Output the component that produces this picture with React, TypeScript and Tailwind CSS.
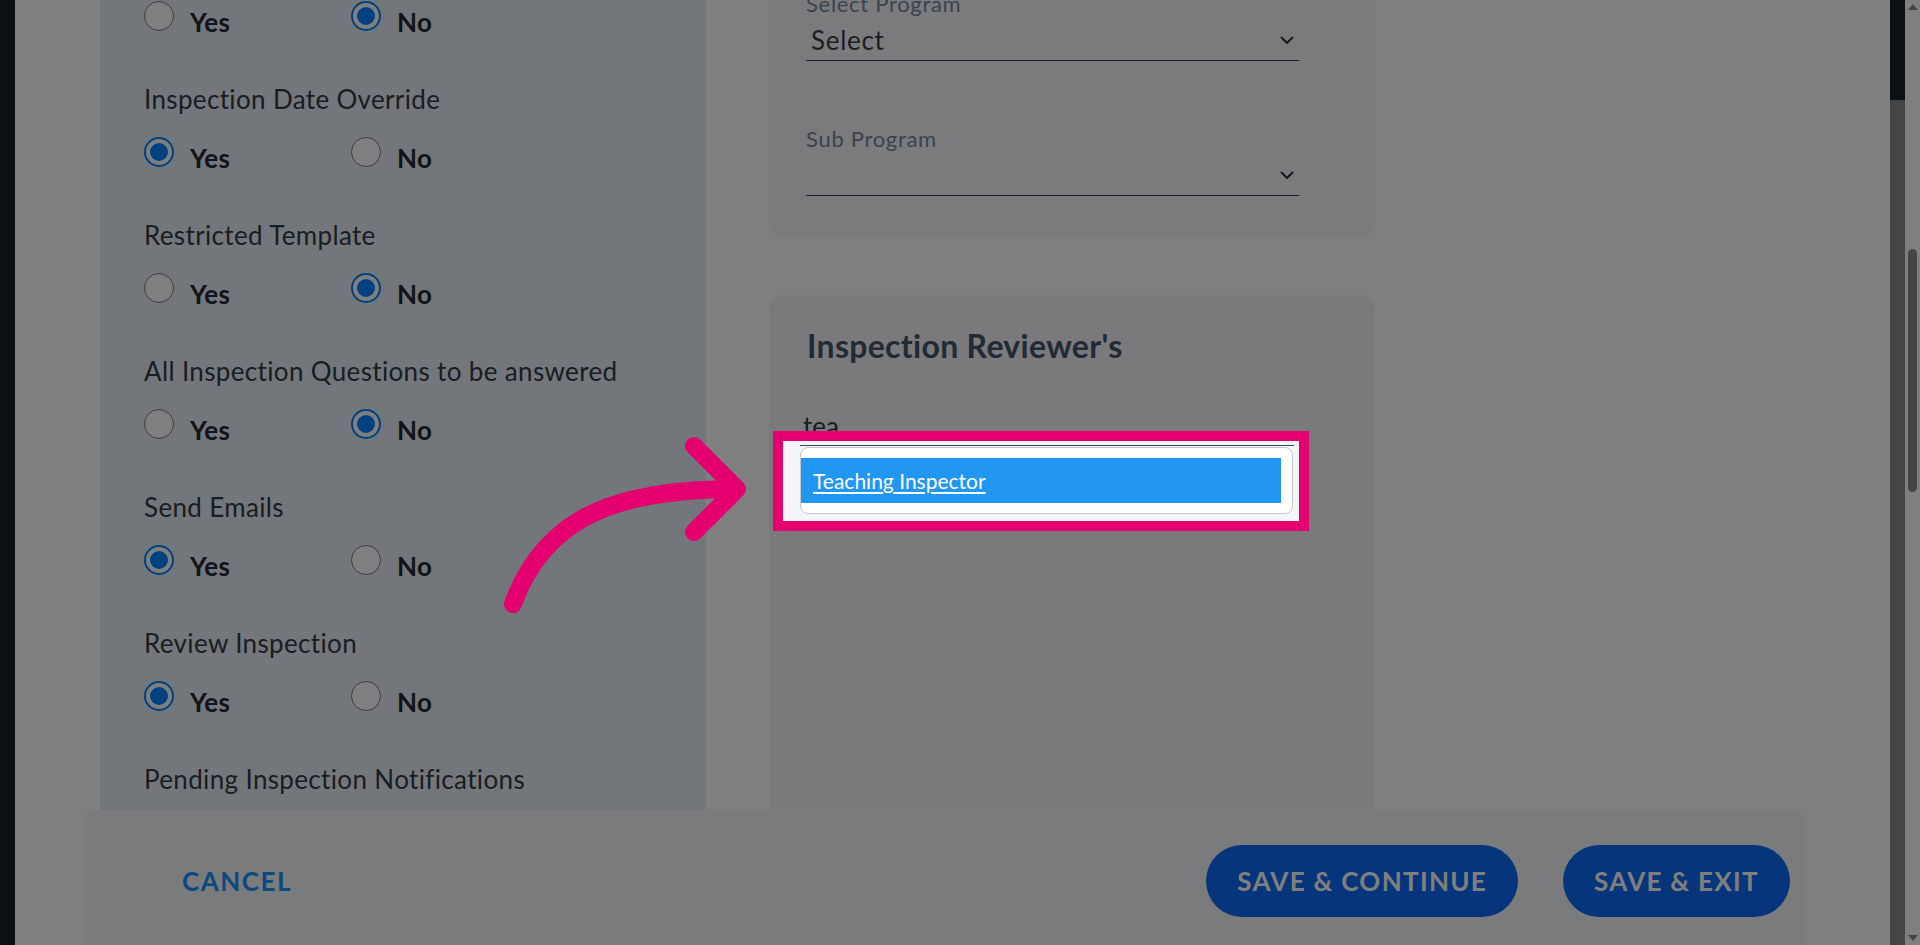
import React from 'react';

type Choice = 'yes' | 'no';

// first row's label is scrolled out of view
const settings: { label: string | null; value: Choice }[] = [
    { label: null, value: 'no' },
    { label: 'Inspection Date Override', value: 'yes' },
    { label: 'Restricted Template', value: 'no' },
    { label: 'All Inspection Questions to be answered', value: 'no' },
    { label: 'Send Emails', value: 'yes' },
    { label: 'Review Inspection', value: 'yes' },
    { label: 'Pending Inspection Notifications', value: 'no' },
];

const Radio = ({ checked }: { checked: boolean }) =>
    checked ? (
        <span className="flex h-[30px] w-[30px] shrink-0 items-center justify-center rounded-full border-2 border-[#0084fe] bg-white">
            <span className="h-[18px] w-[18px] rounded-full bg-[#0084fe]" />
        </span>
    ) : (
        <span className="h-[30px] w-[30px] shrink-0 rounded-full border-[1.5px] border-[#7a7a7a] bg-white" />
    );

const Option = ({ text, checked }: { text: string; checked: boolean }) => (
    <div className="flex h-[30px] w-[207px] items-start gap-4">
        <Radio checked={checked} />
        <span className="text-[26px] font-bold leading-[42px] tracking-[0.4px] text-[#24282e]">{text}</span>
    </div>
);

const Chevron = () => (
    <svg width="14" height="9" viewBox="0 0 14 9" fill="none">
        <path d="M1.5 1.5 7 7l5.5-5.5" stroke="#2c323a" strokeWidth="2" strokeLinecap="round" strokeLinejoin="round" />
    </svg>
);

const SelectField = ({ label, value }: { label: string; value: string }) => (
    <div>
        <div className="text-[22px] leading-[28px] tracking-[0.7px] text-[#74879e]">{label}</div>
        <div className="mt-[2px] flex h-[41px] w-[493px] items-center justify-between border-b-[1.5px] border-[#3a4658] px-[5px]">
            <span className="text-[26px] leading-[40px] tracking-[0.7px] text-[#363e4a]">{value}</span>
            <Chevron />
        </div>
    </div>
);

export default function App() {
    return (
        <div className="relative flex h-[945px] w-full overflow-hidden bg-white font-['Lato','Open_Sans',sans-serif]">
            {/* left window edge */}
            <div className="w-[15px] shrink-0 bg-[#142028]" />

            <div className="relative flex-1">
                {/* scrolled content */}
                <div className="-mt-[40px] flex items-start gap-[63px] pl-[85px]">
                    {/* settings panel */}
                    <div className="h-[1100px] w-[606px] shrink-0 bg-[#e6eef6] pl-[44px] pt-[41px]">
                        {settings.map((s, i) => (
                            <div key={i} className={i === 0 ? '' : 'mt-[52px]'}>
                                {s.label && (
                                    <div className="mb-[22px] text-[26px] leading-[32px] tracking-[0.35px] text-[#343b45]">{s.label}</div>
                                )}
                                <div className="flex">
                                    <Option text="Yes" checked={s.value === 'yes'} />
                                    <Option text="No" checked={s.value === 'no'} />
                                </div>
                            </div>
                        ))}
                    </div>

                    <div className="w-[606px] shrink-0">
                        {/* program */}
                        <div className="rounded-[14px] bg-[#f6f7fb] pb-[42px] pl-[37px] pt-[30px]">
                            <SelectField label="Select Program" value="Select" />
                            <div className="mt-[64px]">
                                <SelectField label="Sub Program" value="" />
                            </div>
                        </div>

                        {/* reviewers */}
                        <div className="relative mt-[57px] min-h-[700px] rounded-[14px] bg-[#f4f5f9] pl-[31px] pt-[31px]">
                            <h2 className="pl-[7px] text-[32px] font-bold leading-[40px] tracking-[0.3px] text-[#44546a]">Inspection Reviewer's</h2>
                            <div className="mt-[40px] h-[40px] w-[494px] border-b-[1.5px] border-[#3f4650] pl-[3px]">
                                <span className="text-[26px] leading-[40px] text-[#333840]">tea</span>
                            </div>
                            <div className="mt-[1px] w-[493px] rounded-[8px] border border-[#c8c8cc] bg-white py-[10px] pr-[11px]">
                                <div className="flex h-[45px] items-center bg-[#2196f3] pl-[12px]">
                                    <span className="text-[21px] text-white underline underline-offset-[3px]">Teaching Inspector</span>
                                </div>
                            </div>

                            {/* tutorial highlight */}
                            <div className="pointer-events-none absolute left-[4px] top-[136px] z-40 h-[100px] w-[536px] border-[10px] border-[#e4006f] shadow-[0_0_0_9999px_rgba(0,0,0,0.5)]" />
                        </div>
                    </div>
                </div>

                {/* footer actions */}
                <div className="absolute bottom-0 left-[69px] right-[85px] z-10 flex h-[135px] items-start justify-between rounded-t-[10px] bg-[#f4f6fa] pt-[35px]">
                    <button className="flex h-[72px] items-center pl-[98px] text-[26px] font-bold tracking-[1.5px] text-[#1494fe]">
                        CANCEL
                    </button>
                    <div className="flex gap-[45px] pr-[15px]">
                        <button className="h-[72px] rounded-full bg-[#0c6af6] px-[31px] text-[26px] font-bold tracking-[1.3px] text-white">
                            SAVE &amp; CONTINUE
                        </button>
                        <button className="h-[72px] rounded-full bg-[#0c6af6] px-[31px] text-[26px] font-bold tracking-[1.3px] text-white">
                            SAVE &amp; EXIT
                        </button>
                    </div>
                </div>
            </div>

            {/* right window edge */}
            <div className="flex w-[15px] shrink-0 flex-col bg-[#888888]">
                <div className="h-[100px] bg-[#142028]" />
            </div>

            {/* scrollbar */}
            <div className="relative flex w-[15px] shrink-0 flex-col items-center bg-white">
                <svg className="mt-[4px]" width="10" height="6" viewBox="0 0 10 6">
                    <path d="M5 0 10 6H0z" fill="#8a8a8a" />
                </svg>
                <div className="mt-[239px] h-[243px] w-[9px] rounded-full bg-[#8a8a8a]" />
                <div className="flex-1" />
                <svg className="mb-[4px]" width="10" height="6" viewBox="0 0 10 6">
                    <path d="M0 0h10L5 6z" fill="#8a8a8a" />
                </svg>
            </div>

            {/* pointer arrow */}
            <svg className="pointer-events-none absolute left-0 top-0 z-50" width="1920" height="945" viewBox="0 0 1920 945" fill="none">
                <path
                    d="M513 604C545 515 620 489 737 489M694 446 737 489 694 532"
                    stroke="#e4006f"
                    strokeWidth="18"
                    strokeLinecap="round"
                    strokeLinejoin="round"
                />
            </svg>
        </div>
    );
}
